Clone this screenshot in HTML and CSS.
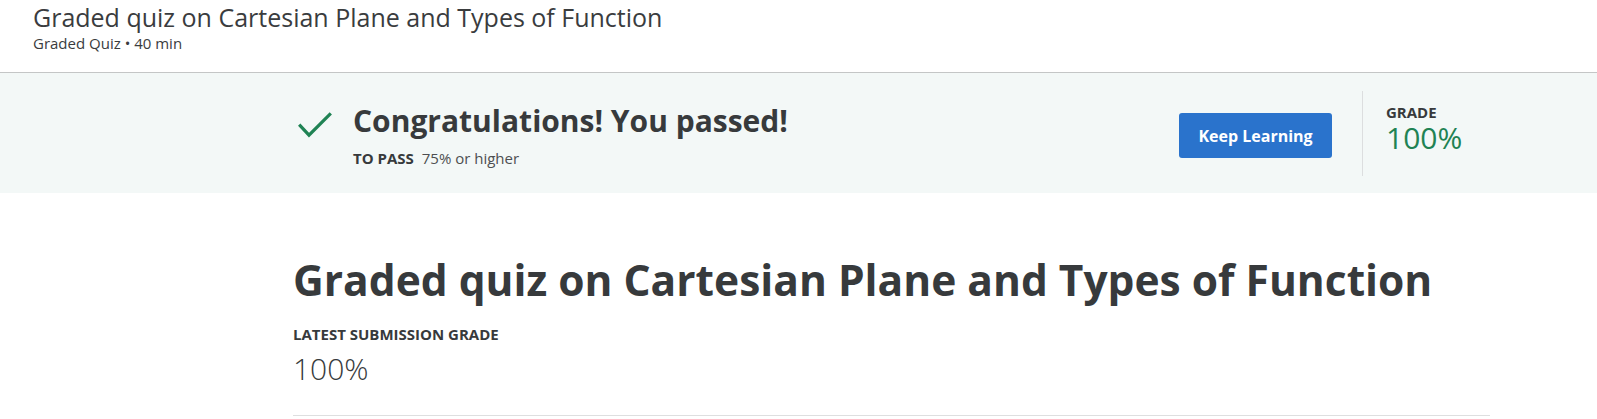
FILE: index.html
```html
<!DOCTYPE html>
<html lang="en">
<head>
<meta charset="utf-8">
<title>Graded quiz on Cartesian Plane and Types of Function</title>
<link rel="stylesheet" href="styles.css">
</head>
<body>
<header class="topbar">
  <h1 class="topbar-title">Graded quiz on Cartesian Plane and Types of Function</h1>
  <div class="topbar-meta">Graded Quiz • 40 min</div>
</header>
<section class="banner">
  <div class="container banner-row">
    <div class="result">
      <svg class="check" width="34" height="26" viewBox="0 0 34 26" aria-hidden="true">
        <path d="M1.2 12.6 L11 23.2 L32.8 1.4" fill="none" stroke="#1f8354" stroke-width="3.2"/>
      </svg>
      <div class="result-text">
        <div class="result-title">Congratulations! You passed!</div>
        <div class="result-pass"><span class="pass-label">TO PASS</span> 75% or higher</div>
      </div>
    </div>
    <button class="btn-primary">Keep Learning</button>
    <div class="divider"></div>
    <div class="grade">
      <div class="grade-label">GRADE</div>
      <div class="grade-value">100%</div>
    </div>
  </div>
</section>
<main class="container content">
  <h2 class="quiz-title">Graded quiz on Cartesian Plane and Types of Function</h2>
  <div class="latest-label">LATEST SUBMISSION GRADE</div>
  <div class="latest-value">100%</div>
</main>
</body>
</html>
```
FILE: styles.css
```css
* { box-sizing: border-box; }
html, body { margin: 0; padding: 0; background: #fff; }
body {
  font-family: "Open Sans", "Noto Sans", sans-serif;
  color: #373a3c;
}
.topbar {
  padding: 2px 33px 0;
  height: 73px;
  border-bottom: 1px solid #c4c6c6;
}
.topbar-title {
  margin: 0;
  font-size: 25px;
  font-weight: 400;
  line-height: 30px;
  color: #3a3c3e;
}
.topbar-meta {
  margin-top: 1px;
  font-size: 15px;
  line-height: 20px;
  color: #3a3c3e;
}
.container {
  width: 1197px;
  margin-left: 293px;
}
.banner {
  background: #f3f8f7;
  height: 120px;
}
.banner-row {
  display: flex;
  align-items: flex-start;
  height: 100%;
}
.result {
  flex: 1;
  display: flex;
  align-items: flex-start;
}
.check {
  margin: 39px 0 0 5px;
  flex: none;
}
.result-text { margin-left: 21px; padding-top: 28.4px; }
.result-title {
  font-size: 30px;
  font-weight: 700;
  line-height: 40px;
  color: #373a3c;
}
.result-pass {
  margin-top: 7px;
  font-size: 15px;
  line-height: 20px;
  color: #4d4f51;
}
.pass-label {
  font-size: 15px;
  font-weight: 700;
  color: #373a3c;
  margin-right: 4px;
}
.btn-primary {
  flex: none;
  width: 153px;
  height: 45px;
  margin-top: 40px;
  border: none;
  border-radius: 3px;
  background: #2a73cc;
  color: #fff;
  font-family: inherit;
  font-size: 16px;
  font-weight: 700;
  padding: 0;
}
.divider {
  flex: none;
  width: 1px;
  height: 85px;
  margin: 18px 23px 0 30px;
  background: #dcdedf;
}
.grade { flex: none; width: 104px; padding-top: 29.2px; }
.grade-label {
  font-size: 15px;
  font-weight: 700;
  line-height: 20px;
  color: #373a3c;
}
.grade-value {
  font-size: 30px;
  font-weight: 400;
  line-height: 32px;
  color: #1f8354;
}
.content {
  padding-top: 59px;
  border-bottom: 1px solid #dedfe0;
  padding-bottom: 26px;
}
.quiz-title {
  margin: 0;
  font-size: 42.5px;
  font-weight: 700;
  line-height: 56px;
  color: #373a3c;
}
.latest-label {
  margin-top: 16px;
  font-size: 15px;
  font-weight: 700;
  line-height: 20px;
  color: #373a3c;
}
.latest-value {
  margin-top: 5px;
  font-size: 30px;
  font-weight: 300;
  line-height: 40px;
  color: #373a3c;
}
```
